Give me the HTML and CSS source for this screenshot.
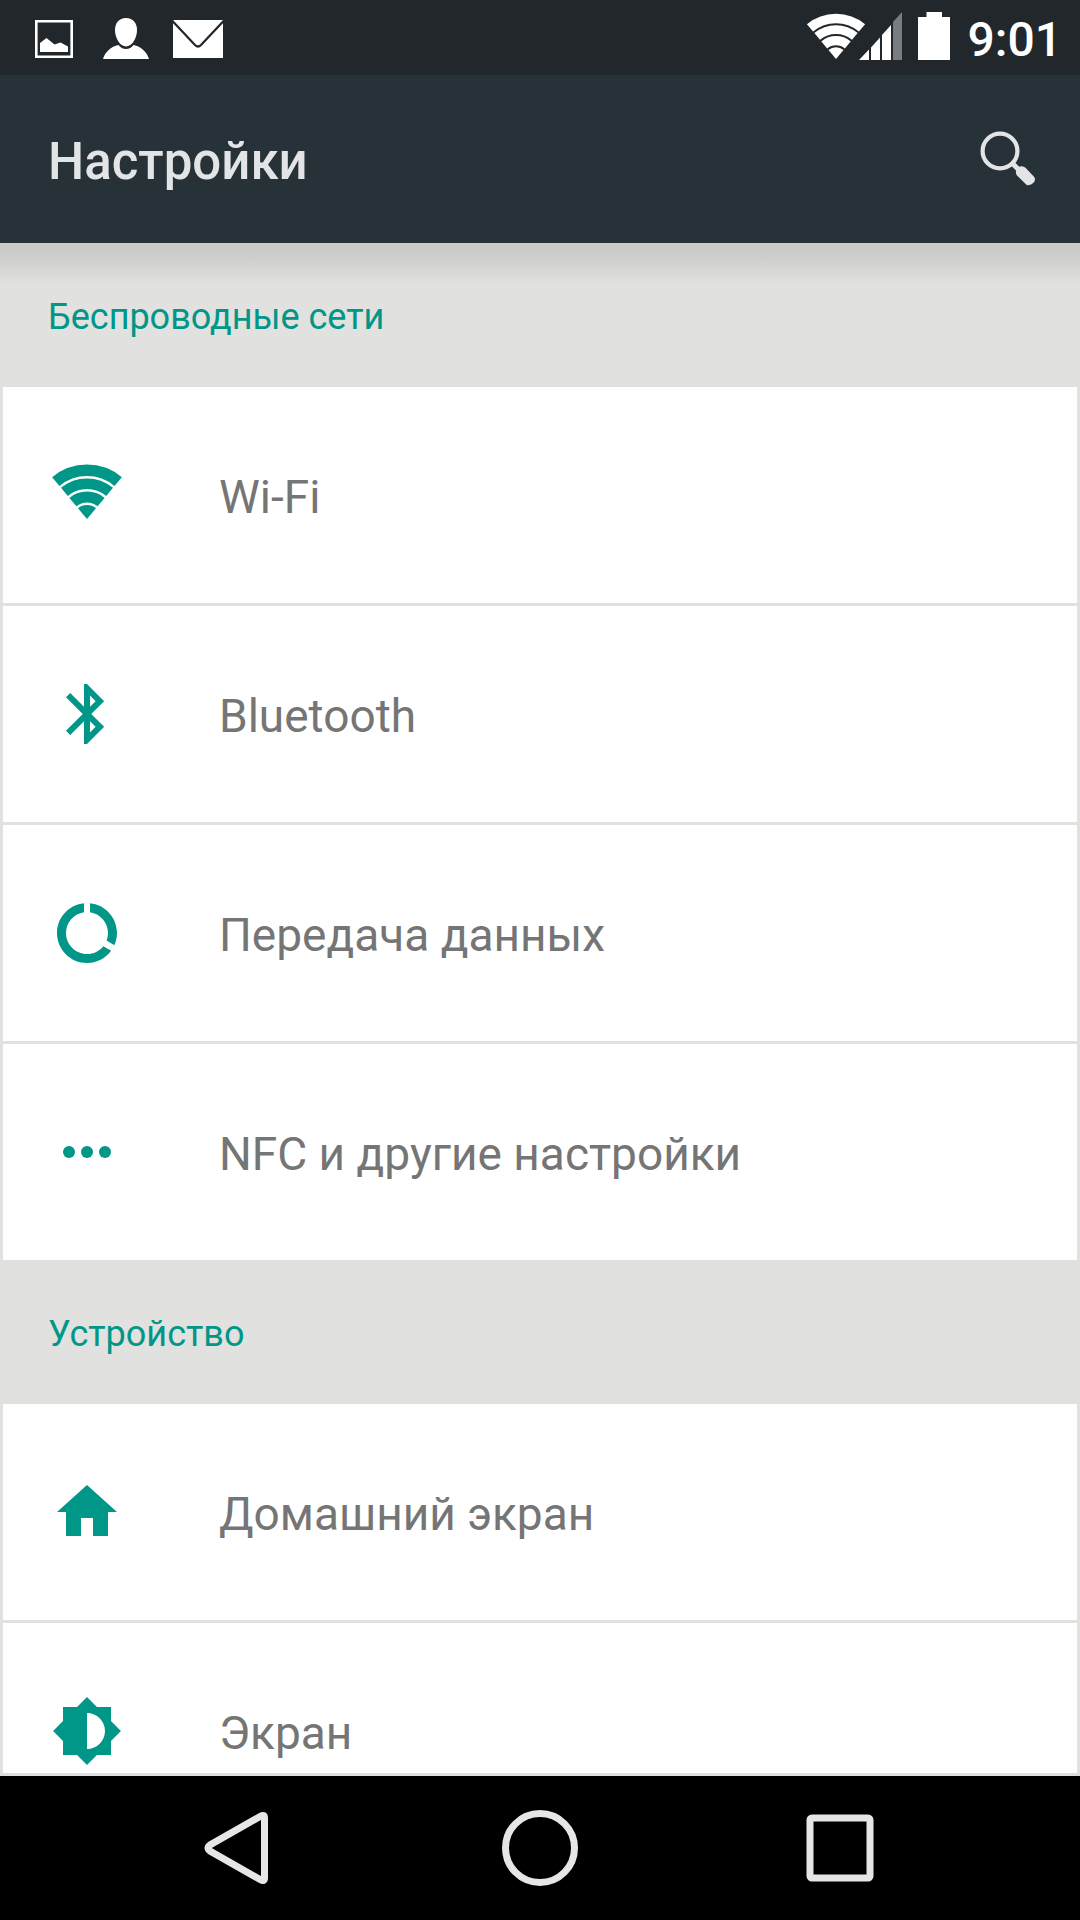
FILE: index.html
```
<!DOCTYPE html>
<html lang="ru">
<head>
<meta charset="utf-8">
<meta name="viewport" content="width=device-width, initial-scale=1">
<title>Настройки</title>
<link rel="stylesheet" href="styles.css">
</head>
<body class="screen">
<svg class="defs" aria-hidden="true">
  <symbol id="wifi" viewBox="0 0 72 56">
    <g fill="none" stroke="currentColor">
      <path stroke-width="11.5" d="M4.8 17.6a48.75 48.75 0 0 1 62.4 0"/>
      <path stroke-width="10.5" d="M13.4 27.9a35.25 35.25 0 0 1 45.2 0"/>
      <path stroke-width="11" d="M21.9 38.1a22 22 0 0 1 28.2 0"/>
    </g>
    <path fill="currentColor" d="M36 55L27 44.2a14 14 0 0 1 18 0z"/>
  </symbol>
</svg>

<div class="status">
  <div class="status-group notifications">
    <svg class="picture" width="38" height="38" viewBox="0 0 38 38"><path d="M1.3 1.3h35.4v35.4H1.3z" fill="none" stroke="#fff" stroke-width="2.6"/><path d="M5 23l6.500-5 8 6.500 6-2 7.500 4V32H5z" fill="#fff"/></svg>
    <svg width="46" height="42" viewBox="0 0 46 42"><path d="M23 0c7 0 11 5 11 12 0 8-5 16.500-11 16.500S12 20 12 12C12 5 16 0 23 0z" fill="#fff"/><path d="M0 41c2-7 8-12.500 15.500-14 2 2.500 4.500 4 7.500 4s5.500-1.500 7.500-4C38 28.500 44 34 46 41z" fill="#fff"/></svg>
    <svg width="50" height="38" viewBox="0 0 50 38"><path d="M0 0h50v38H0z" fill="#fff"/><path d="M-1 .5L22 25q3 3 6 0L51 .5" fill="none" stroke="#22272b" stroke-width="2.200"/></svg>
  </div>
  <div class="status-group indicators">
    <svg class="status-wifi" width="60" height="47"><use href="#wifi"/></svg>
    <svg class="signal" width="43" height="48" viewBox="0 0 43 48"><path d="M0 48l10-10.500V48zM12 35.500l9-10V48h-9zM23 23l9-10v35h-9z" fill="#fff"/><path d="M34 10l9-10v48h-9z" fill="#7a7d80"/></svg>
    <svg class="battery" width="32" height="48" viewBox="0 0 32 48"><path d="M8.500 0h15.500v5h8v43H0V5h8.500z" fill="#fff"/></svg>
    <time class="clock">9:01</time>
  </div>
</div>

<header class="appbar">
  <h1 class="title">Настройки</h1>
  <button class="search" type="button" aria-label="Поиск">
    <svg width="56" height="56" viewBox="0 0 56 56"><circle cx="20" cy="20" r="17.400" fill="none" stroke="#e3e4e6" stroke-width="4.200"/><path d="M31 31l8 8" stroke="#e3e4e6" stroke-width="5"/><path d="M36 40q0-1.500 1.500-2.500 1-2 3.500-2.300 3-.2 4.500 1.500l8.500 9q2.200 3-.5 6t-6.800 2.300L37 44.500q-1.500-2-1-4.500z" fill="#e3e4e6"/></svg>
  </button>
</header>

<main class="content">
  <section>
    <h2 class="heading">Беспроводные сети</h2>
    <ul class="list">
      <li><a class="row" href="#wifi-settings"><span class="icon"><svg class="wifi" width="72" height="56"><use href="#wifi"/></svg></span><span class="label">Wi-Fi</span></a></li>
      <li><a class="row" href="#bluetooth"><span class="icon"><svg width="72" height="72" viewBox="0 0 24 24"><path fill="currentColor" d="M17.71 7.71L12 2h-1v7.590L6.410 5 5 6.410 10.590 12 5 17.590 6.410 19 11 14.410V22h1l5.710-5.710-4.300-4.290 4.300-4.290zM13 5.830l1.880 1.880L13 9.590V5.830zm1.880 10.460L13 18.170v-3.760l1.880 1.880z"/></svg></span><span class="label">Bluetooth</span></a></li>
      <li><a class="row" href="#data"><span class="icon"><svg width="72" height="72" viewBox="0 0 24 24"><path fill="currentColor" d="M13 2.050v3.030c3.390.49 6 3.390 6 6.920 0 .9-.18 1.750-.48 2.540l2.600 1.530c.56-1.240.88-2.620.88-4.070 0-5.180-3.950-9.450-9-9.950zM12 19c-3.870 0-7-3.130-7-7 0-3.530 2.610-6.430 6-6.920V2.050c-5.060.5-9 4.760-9 9.950 0 5.520 4.470 10 9.990 10 3.310 0 6.240-1.610 8.060-4.090l-2.600-1.530C16.170 17.980 14.210 19 12 19z"/></svg></span><span class="label">Передача данных</span></a></li>
      <li><a class="row" href="#more"><span class="icon"><svg width="72" height="72" viewBox="0 0 24 24" fill="currentColor"><circle cx="6" cy="12" r="2"/><circle cx="12" cy="12" r="2"/><circle cx="18" cy="12" r="2"/></svg></span><span class="label">NFC и другие настройки</span></a></li>
    </ul>
  </section>
  <section>
    <h2 class="heading">Устройство</h2>
    <ul class="list">
      <li><a class="row" href="#home"><span class="icon"><svg width="72" height="72" viewBox="0 0 24 24"><path fill="currentColor" d="M10 20v-6h4v6h5v-8h3L12 3 2 12h3v8z"/></svg></span><span class="label">Домашний экран</span></a></li>
      <li><a class="row" href="#display"><span class="icon"><svg width="72" height="72" viewBox="0 0 24 24"><path fill="currentColor" d="M20 15.310L23.310 12 20 8.690V4h-4.690L12 .69 8.690 4H4v4.690L.69 12 4 15.310V20h4.690L12 23.310 15.310 20H20v-4.690zM12 18V6c3.310 0 6 2.690 6 6s-2.690 6-6 6z"/></svg></span><span class="label">Экран</span></a></li>
    </ul>
  </section>
</main>

<nav class="navbar">
  <button class="key" type="button" aria-label="Назад"><svg width="80" height="80" viewBox="0 0 80 80"><path d="M60.500 8.200Q64.500 6 64.500 10v60q0 4-4 1.800L10 43q-4-3 0-6z"/></svg></button>
  <button class="key" type="button" aria-label="Домой"><svg width="80" height="80" viewBox="0 0 80 80"><circle cx="40" cy="40" r="34.500"/></svg></button>
  <button class="key" type="button" aria-label="Обзор"><svg width="80" height="80" viewBox="0 0 80 80"><rect x="10" y="10" width="60" height="60" rx="2"/></svg></button>
</nav>
</body>
</html>
```
FILE: styles.css
```
* {
  box-sizing: border-box;
}

.screen {
  display: flex;
  flex-direction: column;
  height: 100vh;
  margin: 0;
  overflow: hidden;
  background: #e1e1df;
  font-family: Roboto, "Noto Sans", sans-serif;
}

.defs {
  position: absolute;
  width: 0;
  height: 0;
}

svg {
  display: block;
  flex: none;
}

button {
  display: flex;
  align-items: center;
  justify-content: center;
  padding: 0;
  border: 0;
  background: none;
}

/* Status bar */
.status {
  display: flex;
  flex: none;
  justify-content: space-between;
  height: 75px;
  padding: 0 18px 0 35px;
  background: #22272b;
  color: #fff;
}

.status-group {
  display: flex;
  align-items: center;
}

.notifications {
  gap: 24px;
  padding-top: 2px;
}

.picture {
  margin-right: 6px;
}

.indicators {
  padding-bottom: 3px;
}

.status-wifi {
  margin-right: -7px;
}

.battery {
  margin: 0 18px 0 16px;
}

.clock {
  font-size: 48px;
  font-weight: 500;
  line-height: 56px;
  padding-top: 8px;
}

/* Title bar */
.appbar {
  display: flex;
  flex: none;
  align-items: center;
  justify-content: space-between;
  height: 168px;
  padding: 0 44px 0 48px;
  background: #263238;
}

.title {
  margin: 0;
  padding-top: 6px;
  color: #e3e4e6;
  font-size: 51px;
  font-weight: 500;
  line-height: 60px;
}

/* Settings list */
.content {
  position: relative;
  flex: 1;
  min-height: 0;
  overflow: hidden;
  border-bottom: 3px solid #dfdfdf;
}

.content::before {
  content: "";
  position: absolute;
  inset: 0 0 auto;
  height: 42px;
  background: linear-gradient(rgba(0, 0, 0, 0.1) 8px, rgba(0, 0, 0, 0));
}

.heading {
  display: flex;
  align-items: center;
  height: 144px;
  margin: 0;
  padding: 4px 48px 0;
  color: #009688;
  font-size: 36px;
  font-weight: 400;
  line-height: 44px;
}

.list {
  display: grid;
  gap: 3px;
  margin: 0;
  padding: 0 3px;
  list-style: none;
}

.row {
  display: flex;
  align-items: center;
  gap: 96px;
  height: 216px;
  padding: 0 48px;
  background: #fff;
  color: #757575;
  font-size: 46px;
  line-height: 56px;
  text-decoration: none;
}

.icon {
  color: #009688;
}

.label {
  padding-top: 4px;
}

.wifi {
  margin-bottom: 6px;
}

/* Navigation keys */
.navbar {
  display: grid;
  flex: none;
  grid-template-columns: repeat(3, 1fr);
  height: 144px;
  padding: 0 90px;
  background: #000;
}

.key {
  fill: none;
  stroke: #e6e6e6;
  stroke-width: 7px;
}
```
